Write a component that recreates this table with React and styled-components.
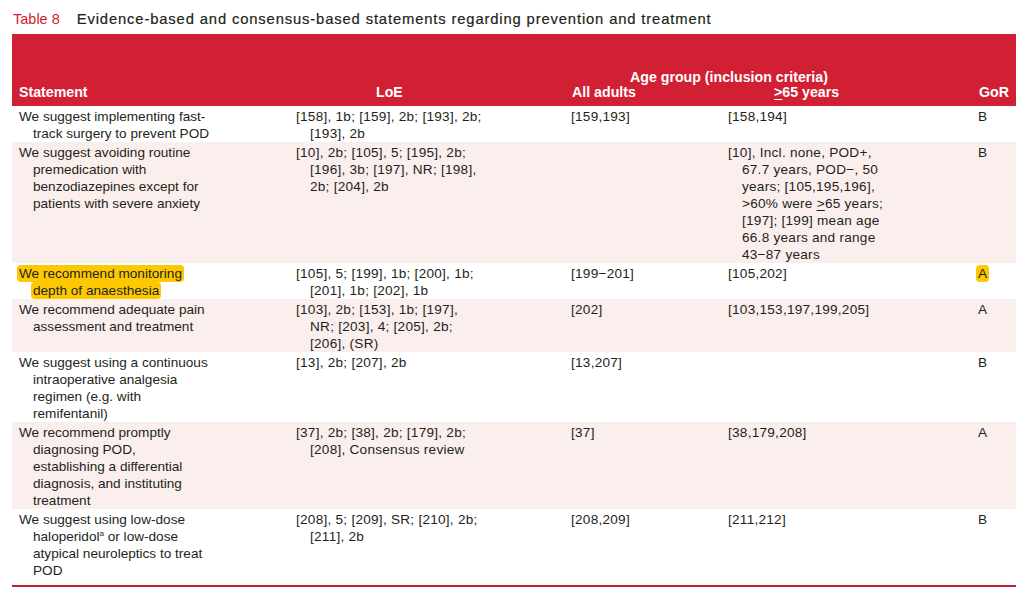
import React from 'react'
import styled, { createGlobalStyle } from 'styled-components'

const COLS = '277px 275px 157px 250px 45px'

const GlobalStyle = createGlobalStyle`
    body{
        margin:0;
        background:#fff;
        font-family:"Liberation Sans", Arial, sans-serif;
        color:#231f20;
    }
`

const Page = styled.div`
    width:1004px;
    padding:11px 0 0 12px;
`

const Title = styled.div`
    display:flex;
    align-items:baseline;
    font-size:14.5px;
    line-height:17px;
    margin-bottom:6px;
    padding-left:1px;
    .label{
        color:#d0202f;
        margin-right:17px;
    }
    .caption{
        color:#231f20;
        font-size:14.8px;
        letter-spacing:0.85px;
        -webkit-text-stroke:0.2px #231f20;
    }
`

const Head = styled.div`
    display:grid;
    grid-template-columns:${COLS};
    grid-template-rows:15px 15px;
    align-content:end;
    height:72px;
    box-sizing:border-box;
    padding-bottom:6px;
    background:#d11f33;
    color:#fff;
    font-weight:bold;
    font-size:14.2px;
    line-height:15px;
`

const HeadCell = styled.div`
    grid-column:${p => p.$col};
    grid-row:${p => p.$row};
    padding-left:${p => p.$pad}px;
    white-space:nowrap;
`

const Row = styled.div`
    display:grid;
    grid-template-columns:${COLS};
    padding-top:2px;
    background:${p => (p.$shaded ? '#fbefee' : '#fff')};
    font-size:13.6px;
    line-height:17px;
`

const Cell = styled.div`
    padding-left:21px;
    text-indent:-14px;
    white-space:nowrap;
    letter-spacing:${p => (p.$refs ? '0.25px' : '0')};
`

const Mark = styled.span`
    background:#fdc800;
    border-radius:4px;
    padding:1px 2px;
    margin:0 -2px;
    box-decoration-break:clone;
    -webkit-box-decoration-break:clone;
`

const Ge = styled.span`
    text-decoration:underline;
    text-underline-offset:2px;
    text-decoration-thickness:1px;
`

const Sup = styled.sup`
    font-size:8px;
    line-height:0;
    vertical-align:5px;
`

const BottomRule = styled.div`
    margin-top:6px;
    height:2px;
    background:#b82136;
`

const rows = [
    {
        statement: ['We suggest implementing fast-', 'track surgery to prevent POD'],
        loe: ['[158], 1b; [159], 2b; [193], 2b;', '[193], 2b'],
        all: ['[159,193]'],
        old: ['[158,194]'],
        gor: 'B',
    },
    {
        statement: ['We suggest avoiding routine', 'premedication with', 'benzodiazepines except for', 'patients with severe anxiety'],
        loe: ['[10], 2b; [105], 5; [195], 2b;', '[196], 3b; [197], NR; [198],', '2b; [204], 2b'],
        all: [],
        old: [
            '[10], Incl. none, POD+,',
            '67.7 years, POD\u2212, 50',
            'years; [105,195,196],',
            <>&gt;60% were <Ge>&gt;</Ge>65 years;</>,
            '[197]; [199] mean age',
            '66.8 years and range',
            '43\u221287 years',
        ],
        gor: 'B',
    },
    {
        statement: ['We recommend monitoring', 'depth of anaesthesia'],
        marked: true,
        loe: ['[105], 5; [199], 1b; [200], 1b;', '[201], 1b; [202], 1b'],
        all: ['[199\u2212201]'],
        old: ['[105,202]'],
        gor: 'A',
    },
    {
        statement: ['We recommend adequate pain', 'assessment and treatment'],
        loe: ['[103], 2b; [153], 1b; [197],', 'NR; [203], 4; [205], 2b;', '[206], (SR)'],
        all: ['[202]'],
        old: ['[103,153,197,199,205]'],
        gor: 'A',
    },
    {
        statement: ['We suggest using a continuous', 'intraoperative analgesia', 'regimen (e.g. with', 'remifentanil)'],
        loe: ['[13], 2b; [207], 2b'],
        all: ['[13,207]'],
        old: [],
        gor: 'B',
    },
    {
        statement: ['We recommend promptly', 'diagnosing POD,', 'establishing a differential', 'diagnosis, and instituting', 'treatment'],
        loe: ['[37], 2b; [38], 2b; [179], 2b;', '[208], Consensus review'],
        all: ['[37]'],
        old: ['[38,179,208]'],
        gor: 'A',
    },
    {
        statement: ['We suggest using low-dose', <>haloperidol<Sup>a</Sup> or low-dose</>, 'atypical neuroleptics to treat', 'POD'],
        loe: ['[208], 5; [209], SR; [210], 2b;', '[211], 2b'],
        all: ['[208,209]'],
        old: ['[211,212]'],
        gor: 'B',
    },
]

const Lines = ({ items }) =>
    items.map((line, i) => (
        <React.Fragment key={i}>
            {i > 0 && <br />}
            {line}
        </React.Fragment>
    ))

const App = () => {
    return (
        <>
            <GlobalStyle />
            <Page>
                <Title>
                    <span className='label'>Table 8</span>
                    <span className='caption'>Evidence-based and consensus-based statements regarding prevention and treatment</span>
                </Title>
                <Head>
                    <HeadCell $col='3 / 5' $row='1' $pad={66}>Age group (inclusion criteria)</HeadCell>
                    <HeadCell $col='1' $row='2' $pad={7}>Statement</HeadCell>
                    <HeadCell $col='2' $row='2' $pad={87}>LoE</HeadCell>
                    <HeadCell $col='3' $row='2' $pad={8}>All adults</HeadCell>
                    <HeadCell $col='4' $row='2' $pad={53}><Ge>&gt;</Ge>65 years</HeadCell>
                    <HeadCell $col='5' $row='2' $pad={8}>GoR</HeadCell>
                </Head>
                {rows.map((row, i) => (
                    <Row key={i} $shaded={i % 2 === 1}>
                        <Cell>
                            {row.marked ? <Mark><Lines items={row.statement} /></Mark> : <Lines items={row.statement} />}
                        </Cell>
                        <Cell $refs><Lines items={row.loe} /></Cell>
                        <Cell $refs><Lines items={row.all} /></Cell>
                        <Cell $refs><Lines items={row.old} /></Cell>
                        <Cell>{row.marked ? <Mark>{row.gor}</Mark> : row.gor}</Cell>
                    </Row>
                ))}
                <BottomRule />
            </Page>
        </>
    )
}

export default App
